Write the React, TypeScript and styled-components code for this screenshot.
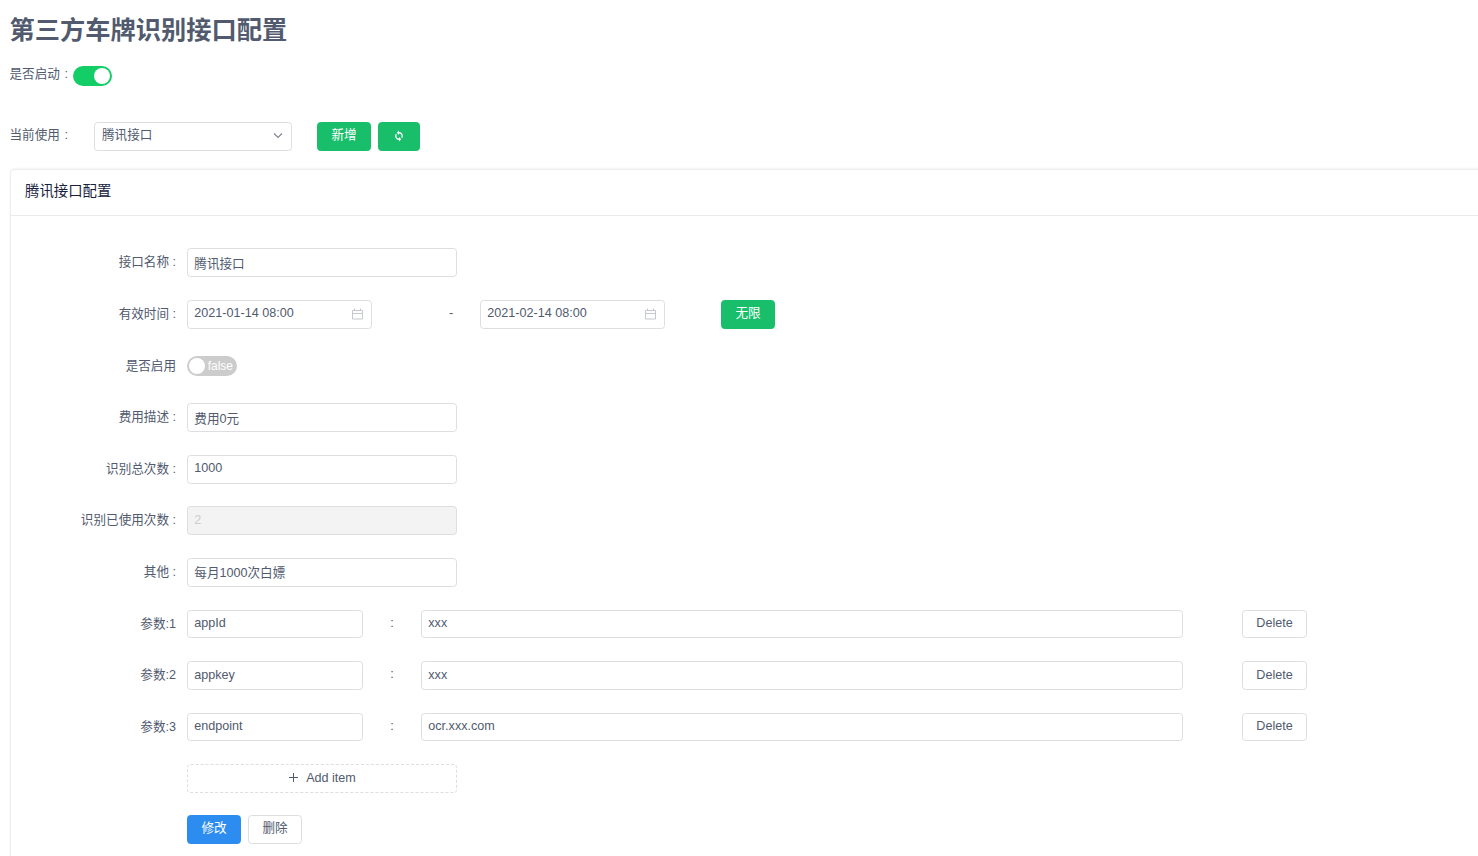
import React from 'react';
import styled, { createGlobalStyle, css } from 'styled-components';

const GlobalStyle = createGlobalStyle`
  *, *::before, *::after { box-sizing: border-box; }
  html, body { margin: 0; padding: 0; background: #fff; }
  body {
    height: 856px;
    overflow: hidden;
    color: #515a6e;
    font-family: "Liberation Sans", "Noto Sans CJK SC", sans-serif;
    font-size: 12.6px;
    line-height: 1.5;
  }
  input, button { font: inherit; color: inherit; }
`;

const Page = styled.main`
  width: 1478px;
  height: 856px;
  overflow: hidden;
  padding: 11px 0 0 9.5px;
`;

const Title = styled.h1`
  margin: 0;
  height: 38px;
  line-height: 38px;
  font-size: 25.25px;
  font-weight: 700;
  white-space: nowrap;
`;

const StartRow = styled.div`
  display: flex;
  margin-top: 14px;
  height: 24px;
  line-height: 23px;
`;

const Colon = styled.span`
  display: inline-block;
  width: 12.6px;
  text-align: center;
`;

const Track = styled.span<{ $on?: boolean; $wide?: boolean }>`
  display: flex;
  align-items: center;
  width: ${p => (p.$wide ? 50 : 39)}px;
  height: 20px;
  padding: 0 ${p => (p.$wide ? 1.5 : 1.8)}px;
  border-radius: 10px;
  background: ${p => (p.$on ? '#13ce66' : '#ccc')};
  color: #fff;
  font-size: 12px;
  line-height: 20px;
  justify-content: ${p => (p.$on ? 'flex-end' : 'flex-start')};
`;

const StartTrack = styled(Track)`
  margin: 3px 0 0 0.6px;
`;

const Knob = styled.i`
  width: 16.2px;
  height: 16.2px;
  border-radius: 50%;
  background: #fff;
`;

const TrackText = styled.span`
  margin-left: 3px;
`;

const CurrentRow = styled.div`
  display: flex;
  margin-top: 35px;
  height: 29px;
  line-height: 27px;
`;

const CurrentLabel = styled.span`
  width: 84.5px;
`;

const frame = css`
  border: 1px solid #dcdee2;
  border-radius: 3.6px;
  background: #fff;
`;

const Select = styled.div`
  ${frame}
  display: flex;
  justify-content: space-between;
  align-items: center;
  width: 198px;
  height: 29px;
  padding: 0 8px 2px 7px;
  margin-right: 25px;
`;

const Chevron = styled.svg`
  width: 10px;
  height: 10px;
  fill: none;
  stroke: #808695;
  stroke-width: 1.2;
`;

const Button = styled.button<{ $kind?: 'success' | 'primary'; $width?: number }>`
  ${frame}
  display: flex;
  align-items: center;
  justify-content: center;
  width: ${p => p.$width ?? 54}px;
  height: 28.8px;
  padding: 0 0 2px;
  line-height: 20px;
  white-space: nowrap;
  ${p => p.$kind === 'success' && css`background: #19be6b; border-color: #19be6b; color: #fff;`}
  ${p => p.$kind === 'primary' && css`background: #2d8cf0; border-color: #2d8cf0; color: #fff;`}
`;

const ButtonGroup = styled.div`
  display: flex;
  gap: 7px;
`;

const SyncIcon = styled.svg`
  width: 12px;
  height: 12px;
  margin-top: 2px;
  fill: #fff;
`;

const Card = styled.section`
  margin: 19px -40px 0 1.5px;
  height: 760px;
  border-radius: 3.6px;
  background: #fff;
  box-shadow: 0 0 0 1px #ebedef, 0 -1px 3px rgba(0, 0, 0, 0.1);
`;

const CardHead = styled.header`
  height: 46px;
  padding-left: 14px;
  border-bottom: 1px solid #e8eaec;
  color: #17233d;
  font-size: 14.4px;
  line-height: 43px;
`;

const Form = styled.form`
  padding-top: 32.49px;
`;

const Row = styled.div<{ $gap?: number }>`
  display: flex;
  height: 28.8px;
  margin-bottom: ${p => p.$gap ?? 22.79}px;
`;

const Label = styled.label`
  width: 176px;
  padding-right: 11px;
  text-align: right;
  line-height: 28.4px;
  white-space: pre;
`;

const Input = styled.input<{ $width?: number; $drop?: number }>`
  ${frame}
  width: ${p => p.$width ?? 270}px;
  height: 28.8px;
  padding: ${p => p.$drop ?? 0}px 6.3px ${p => 2 - (p.$drop ?? 0)}px;
  outline: none;
  &:disabled {
    background: #f3f3f3;
    color: #ccc;
  }
`;

const DateField = styled.div`
  ${frame}
  display: flex;
  align-items: center;
  justify-content: space-between;
  width: 185px;
  height: 28.8px;
  padding: 0 8px 2px 6.3px;
`;

const CalendarIcon = styled.svg`
  width: 12px;
  height: 12px;
  margin-top: 1px;
  fill: none;
  stroke: #c5c8ce;
  stroke-width: 1;
`;

const Separator = styled.span<{ $width: number; $shift?: number }>`
  width: ${p => p.$width}px;
  padding-left: ${p => p.$shift ?? 0}px;
  text-align: center;
  line-height: 27px;
`;

const Spacer = styled.span<{ $width: number }>`
  width: ${p => p.$width}px;
`;

const SwitchSlot = styled.span`
  padding-top: 4.5px;
`;

const AddButton = styled(Button)`
  border-style: dashed;
  gap: 8px;
  padding-left: 1px;
`;

const PlusIcon = styled.svg`
  width: 9px;
  height: 9px;
  stroke: #515a6e;
  stroke-width: 1;
`;

const Calendar = () => (
  <CalendarIcon viewBox="0 0 12 12">
    <path d="M1.500 2.500h10v8.500h-10zM1.500 5.500h10M3.500 0.500v2M9.500 0.500v2" />
  </CalendarIcon>
);

const params = [
  { key: 'appId', value: 'xxx' },
  { key: 'appkey', value: 'xxx' },
  { key: 'endpoint', value: 'ocr.xxx.com' },
];

export default function App() {
  return (
    <>
      <GlobalStyle />
      <Page>
        <Title>第三方车牌识别接口配置</Title>
        <StartRow>
          <span>是否启动<Colon>:</Colon></span>
          <StartTrack $on><Knob /></StartTrack>
        </StartRow>
        <CurrentRow>
          <CurrentLabel>当前使用<Colon>:</Colon></CurrentLabel>
          <Select>
            腾讯接口
            <Chevron viewBox="0 0 10 10"><path d="M1 2.500 5 6.500 9 2.500" /></Chevron>
          </Select>
          <ButtonGroup>
            <Button $kind="success">新增</Button>
            <Button $kind="success" $width={42}>
              <SyncIcon viewBox="0 0 24 24">
                <path d="M12 4V1L7.500 5.500 12 10V7c3 0 5.200 2.300 5.200 5 0 1-.3 2-.8 2.800l1.900 1.900A8 8 0 0 0 12 4zM12 17c-3 0-5.200-2.300-5.200-5 0-1 .3-2 .8-2.800L5.700 7.300A8 8 0 0 0 12 20v3l4.500-4.500L12 14z" />
              </SyncIcon>
            </Button>
          </ButtonGroup>
        </CurrentRow>
        <Card>
          <CardHead>腾讯接口配置</CardHead>
          <Form>
            <Row>
              <Label>接口名称 :</Label>
              <Input defaultValue="腾讯接口" $drop={1} />
            </Row>
            <Row>
              <Label>有效时间 :</Label>
              <DateField>2021-01-14 08:00<Calendar /></DateField>
              <Separator $width={108} $shift={50}>-</Separator>
              <DateField>2021-02-14 08:00<Calendar /></DateField>
              <Spacer $width={56} />
              <Button type="button" $kind="success">无限</Button>
            </Row>
            <Row>
              <Label>是否启用</Label>
              <SwitchSlot>
                <Track $wide><Knob /><TrackText>false</TrackText></Track>
              </SwitchSlot>
            </Row>
            <Row>
              <Label>费用描述 :</Label>
              <Input defaultValue="费用0元" $drop={1} />
            </Row>
            <Row>
              <Label>识别总次数 :</Label>
              <Input defaultValue="1000" />
            </Row>
            <Row>
              <Label>识别已使用次数 :</Label>
              <Input defaultValue="2" disabled />
            </Row>
            <Row>
              <Label>其他 :</Label>
              <Input defaultValue="每月1000次白嫖" />
            </Row>
            {params.map((p, i) => (
              <Row key={p.key}>
                <Label>参数:{i + 1}</Label>
                <Input defaultValue={p.key} $width={176} />
                <Separator $width={58}>:</Separator>
                <Input defaultValue={p.value} $width={762} />
                <Spacer $width={59} />
                <Button type="button" $width={65}>Delete</Button>
              </Row>
            ))}
            <Row $gap={22}>
              <Label />
              <AddButton type="button" $width={270}>
                <PlusIcon viewBox="0 0 9 9"><path d="M4.500 0v9M0 4.500h9" /></PlusIcon>
                Add item
              </AddButton>
            </Row>
            <Row>
              <Label />
              <ButtonGroup>
                <Button type="button" $kind="primary">修改</Button>
                <Button type="button">删除</Button>
              </ButtonGroup>
            </Row>
          </Form>
        </Card>
      </Page>
    </>
  );
}
